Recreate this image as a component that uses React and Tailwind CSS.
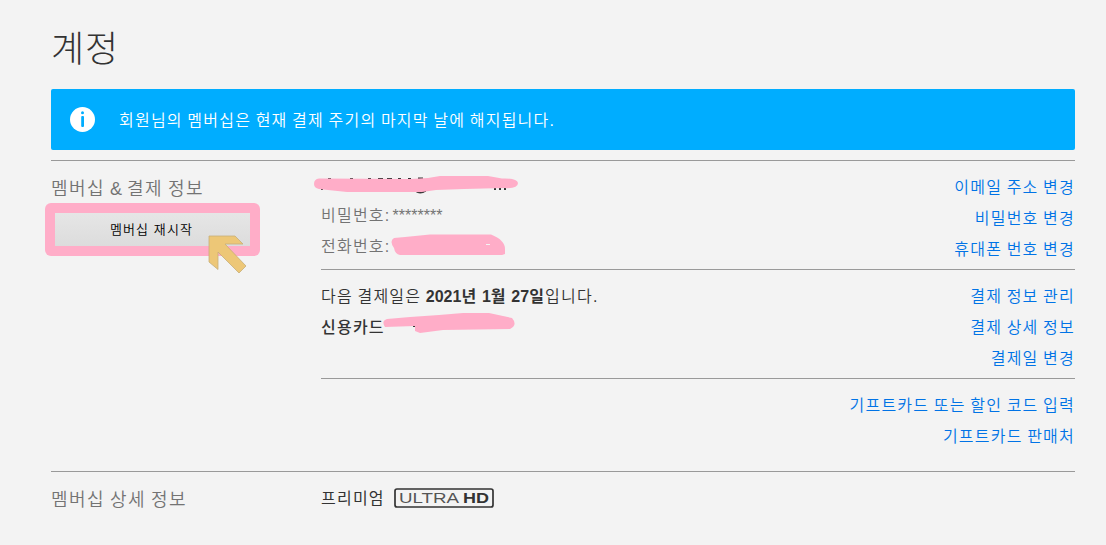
import React from "react";

const fontStack =
  "font-['Liberation_Sans','Noto_Sans_CJK_KR',sans-serif]";

const ChangeLinks = ({ links }) => (
  <ul className="flex shrink-0 flex-col items-end whitespace-nowrap">
    {links.map((link) => (
      <li key={link} className="h-[31px] leading-[31px]">
        <a href="#" className="text-[#0073e6]">
          {link}
        </a>
      </li>
    ))}
  </ul>
);

// latin characters are set without the extra hangul spacing
const Latin = ({ children }) => (
  <span className="tracking-normal">{children}</span>
);

const InfoIcon = () => (
  <svg className="h-[25px] w-[25px]" viewBox="0 0 25 25">
    <circle cx="12.5" cy="12.5" r="12.5" fill="#fff" />
    <circle cx="12.5" cy="5.7" r="1.5" fill="#00adff" />
    <rect x="11.2" y="9" width="2.8" height="11" rx="1" fill="#00adff" />
  </svg>
);

const UltraHdBadge = () => (
  <svg className="ml-[9px] h-5 w-[100px] tracking-normal" viewBox="0 0 100 20">
    <rect x="1" y="1" width="98" height="18" rx="2" fill="none" stroke="#333" strokeWidth="1.7" />
    <text x="5" y="15" fontSize="14" fill="#555" textLength="60" lengthAdjust="spacingAndGlyphs">
      ULTRA
    </text>
    <text x="69" y="15" fontSize="14" fontWeight="bold" fill="#333" textLength="26" lengthAdjust="spacingAndGlyphs">
      HD
    </text>
  </svg>
);

// marker strokes that hide the private account data
const Marker = ({ className, viewBox, d, children }) => (
  <svg className={`absolute ${className}`} viewBox={viewBox} fill="#ffadc8">
    {children}
    <path d={d} />
  </svg>
);

const App = () => {
  return (
    <div
      className={`h-[545px] w-[1106px] overflow-hidden bg-[#f3f3f3] pl-[51px] pr-[31px] text-base font-[350] tracking-[1.22px] [word-spacing:-1.1px] text-[#333] ${fontStack}`}
    >
      <h1 className="h-[89px] pt-[23px] text-[36px] font-light leading-[54px] tracking-[0.8px]">
        계정
      </h1>

      <div className="flex h-[61px] items-center rounded-[2px] bg-[#00adff] pl-[19px] text-white">
        <InfoIcon />
        <p className="ml-6 pt-0.5">
          회원님의 멤버십은 현재 결제 주기의 마지막 날에 해지됩니다<Latin>.</Latin>
        </p>
      </div>

      <section className="mt-[10px] flex h-[311px] border-t border-[#999]">
        <div className="w-[270px] pt-[14px]">
          <h2 className="text-lg font-[350] leading-[28px] tracking-[1.44px] [word-spacing:-1.44px] text-[#737373]">
            멤버십 <Latin>&amp;</Latin> 결제 정보
          </h2>
          <div className="relative -ml-1.5 h-[53px] w-[215px] rounded-[6px] bg-[#ffadc8] p-[10px]">
            <button className="h-[33px] w-full bg-linear-to-b from-[#e6e6e6] to-[#dcdcdc] pr-0.5 text-[13px] font-[350] tracking-[1.1px] text-black">
              멤버십 재시작
            </button>
            <svg className="absolute left-[163px] top-[32px] h-[39px] w-[39px]" viewBox="0 0 39 39">
              <path d="M1 1H27L35 9H17L38 31L31 38L10 17V34.5L1 27Z" fill="#edc777" stroke="#c6ae78" strokeWidth="0.8" />
            </svg>
          </div>
        </div>

        <div className="flex-1">
          <div className="flex h-[109px] justify-between border-b border-[#999] pt-[11px]">
            <div className="leading-[31px] text-[#737373]">
              <div className="relative h-[28px]">
                <Marker
                  className="-left-[7px] top-[3px] h-[20px] w-[205px]"
                  viewBox="0 0 205 20"
                  d="M5 3.5Q0 4 0 9Q0 13 5 14L14 15L33 17H108L122 15L150 14L190 13Q204 14 204 8Q203 3 188 3.5L174 1H126L114 3L96 4Z"
                >
                  <path
                    d="M14 3h3v2h-3zM36 3h3v2h-3zM54 3h3v2h-3zM64 3h5v2h-5zM73 3h5v2h-5zM84 3h3v2h-3zM94 3h3v2h-3zM104 2.5h5v2h-5zM7 13h2v2h-2zM180 12h2v3h-2zM185 12h2v3h-2zM190 12h2v3h-2z"
                    fill="#333"
                  />
                  <path d="M101 16Q106 20 112 16Z" fill="#333" stroke="#333" />
                </Marker>
              </div>
              <div className="h-[31px]">
                비밀번호<Latin>: ********</Latin>
              </div>
              <div className="relative h-[31px]">
                전화번호<Latin>:</Latin>
                <Marker
                  className="left-[70px] top-[3px] h-[22px] w-[115px]"
                  viewBox="0 0 115 22"
                  d="M3 4L14 3L39 0.5L100 0.5Q114 6 114 15V20L111 21H9Q4 20 3 14Q-2 7 3 4ZM95 10V11H99V10Z"
                />
              </div>
            </div>
            <ChangeLinks
              links={["이메일 주소 변경", "비밀번호 변경", "휴대폰 번호 변경"]}
            />
          </div>

          <div className="flex h-[109px] justify-between border-b border-[#999] pt-[11px]">
            <div className="leading-[31px]">
              <p>
                다음 결제일은{" "}
                <b>
                  <Latin>2021</Latin>년 <Latin>1</Latin>월 <Latin>27</Latin>일
                </b>
                입니다<Latin>.</Latin>
              </p>
              <p className="relative font-medium">
                신용카드
                <Marker
                  className="left-[62px] top-[1px] h-[21px] w-[134px]"
                  viewBox="0 0 134 21"
                  d="M4 6L27 4L56 2L80 0H106L129 5Q135 12 127 16L60 17L37 20L32 18V13L2 14Q-2 8 4 6Z"
                >
                  <path d="M30 12h3v2h-3z" fill="#333" />
                </Marker>
              </p>
            </div>
            <ChangeLinks
              links={["결제 정보 관리", "결제 상세 정보", "결제일 변경"]}
            />
          </div>

          <div className="pt-[11px]">
            <ChangeLinks
              links={["기프트카드 또는 할인 코드 입력", "기프트카드 판매처"]}
            />
          </div>
        </div>
      </section>

      <section className="flex border-t border-[#999]">
        <h2 className="w-[270px] pt-[14px] text-lg font-[350] leading-[28px] tracking-[1.44px] [word-spacing:-1.44px] text-[#737373]">
          멤버십 상세 정보
        </h2>
        <div className="mt-[15px] flex h-[22px] items-center font-normal">
          <span className="pt-0.5">프리미엄</span>
          <UltraHdBadge />
        </div>
      </section>
    </div>
  );
};

export default App;
